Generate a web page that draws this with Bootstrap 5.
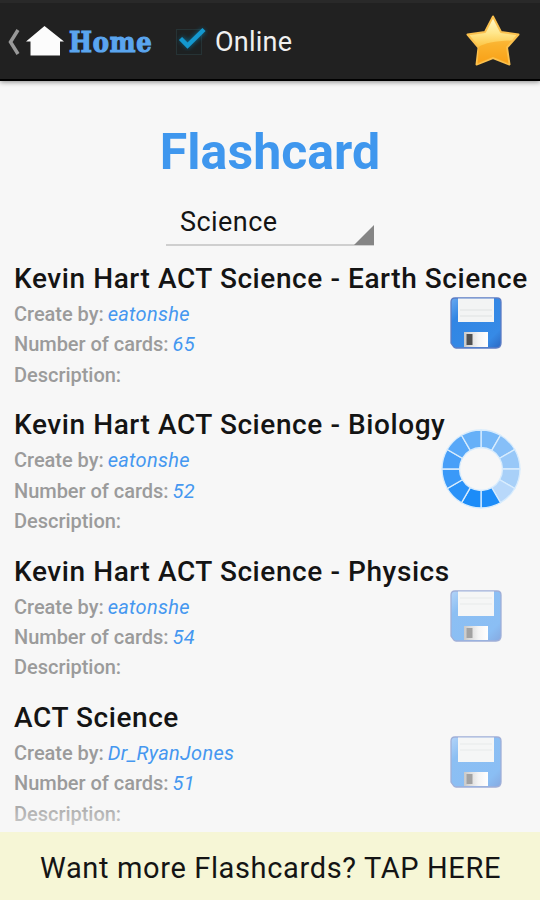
<!DOCTYPE html>
<html lang="en">
<head>
<meta charset="utf-8">
<meta name="viewport" content="width=device-width, initial-scale=1">
<title>Flashcard</title>
<link href="https://cdn.jsdelivr.net/npm/bootstrap@5.3.0/dist/css/bootstrap.min.css" rel="stylesheet">
<style>
body{font-family:Roboto,"Liberation Sans",sans-serif;background:#f7f7f7;color:#141414;height:900px}
.topbar{height:81px;background:#212121;border-top:3px solid #292929;border-bottom:2px solid #000;box-shadow:0 1px 5px rgba(0,0,0,.45);padding:0 20px 0 7px;z-index:2}
.home-label{font-family:"DejaVu Serif Condensed","DejaVu Serif",serif;font-stretch:condensed;font-weight:700;font-size:27px;line-height:36px;color:#5aa5ef;-webkit-text-stroke:1.1px #5aa5ef;width:83px;margin-left:5px;letter-spacing:.8px;white-space:nowrap;padding-top:4px}
.online{font-size:27px;line-height:36px;color:#f0f0f0;white-space:nowrap;margin-left:7px;padding-top:2px;letter-spacing:.25px}
.app-title{font-size:50px;line-height:60px;font-weight:700;color:#3f97ee;margin:41px 0 0;text-align:center;letter-spacing:.05px}
.picker{width:208px;height:46px;border-bottom:2px solid #cfcfcf;margin:18px 0 0 166px;padding-left:14px;font-size:27px;line-height:44px;letter-spacing:.45px}
.picker svg{margin-bottom:-1px}
.deck{height:146.25px;padding-left:14px}
.deck-name{font-size:28px;line-height:34px;font-weight:500;margin:0 0 3px;white-space:nowrap;letter-spacing:.58px}
.deck-line{font-size:20px;line-height:30.4px;font-weight:500;color:#9b9b9b;white-space:nowrap;letter-spacing:-.03px}
.deck-line em{font-weight:400;color:#4597f0;letter-spacing:.3px;margin-left:-1px}
.deck-icon{margin-right:38px;margin-top:-2px}
.deck-icon.wide{margin-right:19px;margin-top:-16px}
.faded{opacity:.55}
.decks{height:569px;margin-top:16px}
.edge{left:0;right:0;bottom:0;height:34px;background:linear-gradient(rgba(247,247,247,0),rgba(247,247,247,.6))}
.more{height:68px;background:#f6f6d6;font-size:29px;letter-spacing:.64px;padding:5px 0 0 40px;white-space:nowrap}
</style>
</head>
<body class="d-flex flex-column overflow-hidden">
<svg width="0" height="0" class="position-absolute" aria-hidden="true">
  <defs>
    <linearGradient id="blue" x1="0" y1="0" x2="1" y2="1"><stop offset="0" stop-color="#6aaaf0"/><stop offset=".25" stop-color="#3186e4"/><stop offset=".8" stop-color="#368ae6"/><stop offset="1" stop-color="#2c68c2"/></linearGradient>
    <linearGradient id="pale" x1="0" y1="0" x2="1" y2="1"><stop offset="0" stop-color="#b4d4f8"/><stop offset=".25" stop-color="#8cbff3"/><stop offset=".8" stop-color="#8abef4"/><stop offset="1" stop-color="#86a9e0"/></linearGradient>
    <linearGradient id="metal"><stop offset="0" stop-color="#c9c9c9"/><stop offset=".6" stop-color="#f4f4f4"/><stop offset="1" stop-color="#fff"/></linearGradient>
    <symbol id="disk" viewBox="0 0 52 52">
      <path d="M5 1H47Q51 1 51 5V46Q51 51 46 51H6Q4 51 3 49L1 46V5Q1 1 5 1Z" fill="url(#blue)" stroke="#5c7cc4" stroke-width="1.3"/>
      <path d="M8 1.500H44V25H8Z" fill="#f3f4f4"/>
      <path d="M10 13H42M10 19H42" stroke="#e0e1e2" stroke-width="1.2"/>
      <path d="M14 35H38V50H14Z" fill="url(#metal)"/>
      <path d="M16.500 37H22.500V48H16.500Z" fill="#505050"/>
    </symbol>
    <symbol id="disk-pale" viewBox="0 0 52 52">
      <path d="M5 1H47Q51 1 51 5V46Q51 51 46 51H6Q4 51 3 49L1 46V5Q1 1 5 1Z" fill="url(#pale)" stroke="#a0afd8" stroke-width="1.3"/>
      <path d="M8 1.500H44V26H8Z" fill="#f5f6f6"/>
      <path d="M10 8H42M10 14H42" stroke="#e8e9ea" stroke-width="1.2"/>
      <path d="M14 36H38V50H14Z" fill="url(#metal)"/>
      <path d="M16.500 38H22.500V48H16.500Z" fill="#a2a2a2"/>
    </symbol>
  </defs>
</svg>

<header class="topbar d-flex align-items-center position-relative flex-shrink-0">
  <svg width="57" height="40" viewBox="0 0 57 40" class="flex-shrink-0">
    <path d="M11 9L3.500 21L11 33" fill="none" stroke="#999" stroke-width="3.500"/>
    <path d="M37.500 5L57 20.500H53V34.500H23.500V20.500H19Z" fill="#fcfcfc"/>
  </svg>
  <span class="home-label">Home</span>
  <svg width="32" height="32" viewBox="0 0 32 32" class="flex-shrink-0 ms-4">
    <defs><filter id="glow" x="-40%" y="-40%" width="180%" height="180%"><feGaussianBlur stdDeviation="2.200"/></filter></defs>
    <rect x=".5" y="4.500" width="25" height="25" fill="#1d2122" stroke="#263335"/>
    <path d="M5 13L12 20L28 5" fill="none" stroke="#087aa8" stroke-width="6" filter="url(#glow)" opacity=".6"/>
    <path d="M4.500 13.500L11.500 20.500L28 4.500" fill="none" stroke="#1498cf" stroke-width="4.500"/>
  </svg>
  <span class="online">Online</span>
  <svg width="54" height="54" viewBox="0 0 54 54" class="ms-auto">
    <defs><linearGradient id="gold" x1="0" y1="0" x2="0" y2="1"><stop offset="0" stop-color="#fffbd0"/><stop offset=".35" stop-color="#ffe68a"/><stop offset=".6" stop-color="#fdc84a"/><stop offset="1" stop-color="#f9a41c"/></linearGradient></defs>
    <path d="M27 2.500L35 18L52.500 20.500L41 33.500L43.500 50.500L27 44L10.500 50.500L12.500 33.500L1.500 20.500L19 18Z" fill="url(#gold)" stroke="#fbc14e" stroke-width="2" stroke-linejoin="round"/>
    <path d="M12.500 33Q22 27 46 26.500L40 33L42.500 50L27 43L11.500 50Z" fill="#f89b10" opacity=".5"/>
  </svg>
</header>

<main>
  <h1 class="app-title">Flashcard</h1>
  <div class="picker d-flex justify-content-between align-items-end">
    <span>Science</span>
    <svg width="20" height="20" viewBox="0 0 20 20"><path d="M20 0V20H0Z" fill="#858585"/></svg>
  </div>
  <div class="decks overflow-hidden position-relative">
    <section class="deck d-flex flex-column">
      <h2 class="deck-name">Kevin Hart ACT Science - Earth Science</h2>
      <div class="d-flex justify-content-between align-items-start">
        <div><div class="deck-line">Create by: <em>eatonshe</em></div><div class="deck-line">Number of cards: <em>65</em></div><div class="deck-line">Description:</div></div>
        <svg class="deck-icon" width="52" height="52"><use href="#disk"/></svg>
      </div>
    </section>
    <section class="deck d-flex flex-column">
      <h2 class="deck-name">Kevin Hart ACT Science - Biology</h2>
      <div class="d-flex justify-content-between align-items-start">
        <div><div class="deck-line">Create by: <em>eatonshe</em></div><div class="deck-line">Number of cards: <em>52</em></div><div class="deck-line">Description:</div></div>
        <svg id="ring" class="deck-icon wide" width="80" height="80" viewBox="-40 -40 80 80"></svg>
      </div>
    </section>
    <section class="deck d-flex flex-column">
      <h2 class="deck-name">Kevin Hart ACT Science - Physics</h2>
      <div class="d-flex justify-content-between align-items-start">
        <div><div class="deck-line">Create by: <em>eatonshe</em></div><div class="deck-line">Number of cards: <em>54</em></div><div class="deck-line">Description:</div></div>
        <svg class="deck-icon" width="52" height="52"><use href="#disk-pale"/></svg>
      </div>
    </section>
    <section class="deck d-flex flex-column">
      <h2 class="deck-name">ACT Science</h2>
      <div class="d-flex justify-content-between align-items-start">
        <div><div class="deck-line">Create by: <em>Dr_RyanJones</em></div><div class="deck-line">Number of cards: <em>51</em></div><div class="deck-line">Description:</div></div>
        <svg class="deck-icon" width="52" height="52"><use href="#disk-pale"/></svg>
      </div>
    </section>
    <div class="edge position-absolute"></div>
  </div>
</main>
<footer class="more d-flex align-items-center mt-auto flex-shrink-0">Want more Flashcards? TAP HERE</footer>

<script src="https://cdn.jsdelivr.net/npm/bootstrap@5.3.0/dist/js/bootstrap.bundle.min.js"></script>
<script>
// Twelve wedges, clockwise from the top, each with its own shade
const shades=['#76b8f8','#86bff8','#98c8f8','#a8d0f8','#b8d8fa','#1c8cf8','#1c8cf8','#2a92f8','#3a99f8','#489ff8','#58a8f8','#66b0f8'];
const pt=(r,a)=>(r*Math.sin(a)).toFixed(2)+' '+(-r*Math.cos(a)).toFixed(2);
document.getElementById('ring').innerHTML=shades.map((c,i)=>{
  const a=i*Math.PI/6,b=a+Math.PI/6;
  return `<path d="M${pt(39,a)}A39 39 0 0 1 ${pt(39,b)}L${pt(21.5,b)}A21.5 21.5 0 0 0 ${pt(21.5,a)}Z" fill="${c}" stroke="#d8ecfd" stroke-width="1.300"/>`;
}).join('');
</script>
</body>
</html>
